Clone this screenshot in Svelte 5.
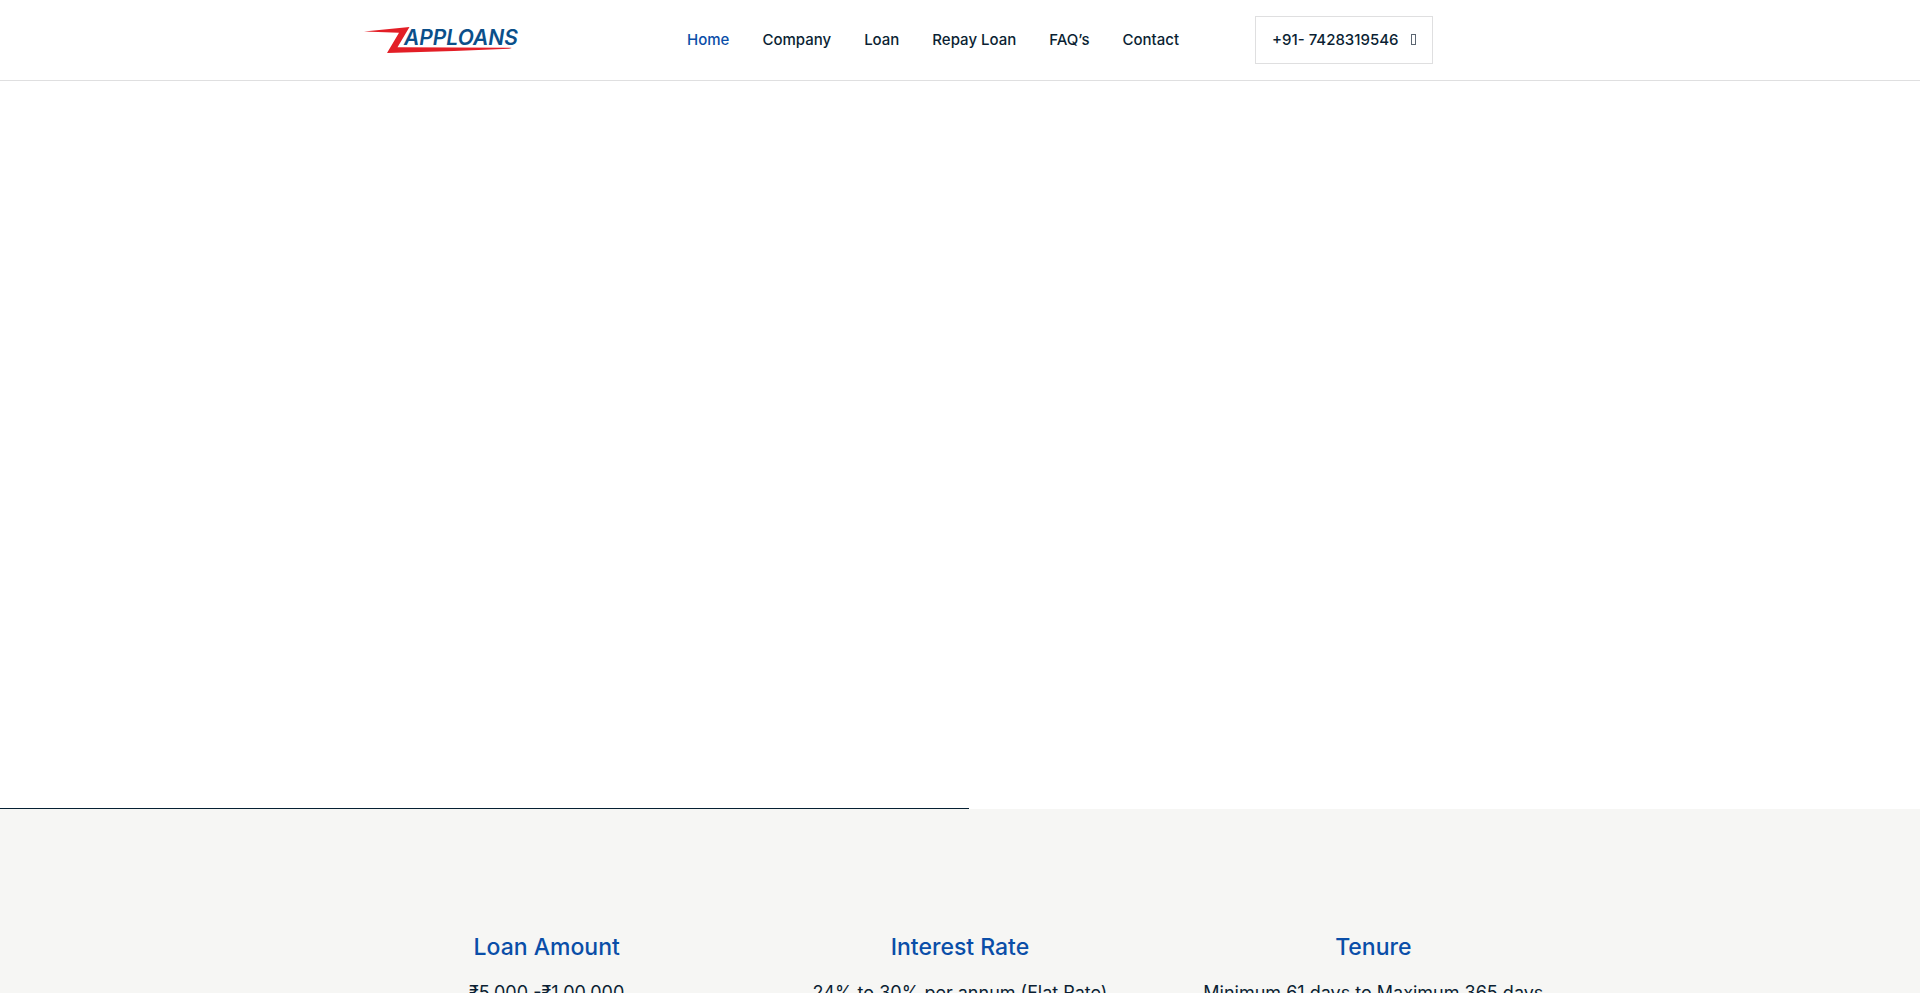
<script>
    const links = [
        { label: "Home", href: "#home" },
        { label: "Company", href: "#company" },
        { label: "Loan", href: "#loan" },
        { label: "Repay Loan", href: "#repay" },
        { label: "FAQ’s", href: "#faq" },
        { label: "Contact", href: "#contact" },
    ];

    const terms = [
        { title: "Loan Amount", text: "₹5,000 -₹1,00,000" },
        { title: "Interest Rate", text: "24% to 30% per annum (Flat Rate)" },
        { title: "Tenure", text: "Minimum 61 days to Maximum 365 days" },
    ];

    let active = "Home";
    let progress = 50.45;
</script>

<header>
    <div class="bar">
        <a class="logo" href="#home" aria-label="Zapploans">
            <svg viewBox="0 0 154 30" width="154" height="30">
                <path d="M0 6.500 45.500 2 33.500 22.300 147 22.800Q149 23.200 145 23.700L90 26 23 28 35 7.800Z" fill="#e31e26" />
                <text x="40" y="20">APPLOANS</text>
            </svg>
        </a>
        <nav>
            {#each links as link}
                <a href={link.href} class:active={link.label === active}>{link.label}</a>
            {/each}
        </nav>
        <a class="phone" href="tel:+917428319546">
            +91- 7428319546
            <svg viewBox="0 0 5 11" width="5" height="11" aria-hidden="true">
                <rect x="0.5" y="0.5" width="4" height="10" />
            </svg>
        </a>
    </div>
</header>

<main>
    <section class="hero">
        <div class="progress" style="width: {progress}%"></div>
    </section>

    <section class="terms">
        <div class="columns">
            {#each terms as term}
                <div class="term">
                    <h2>{term.title}</h2>
                    <p>{term.text}</p>
                </div>
            {/each}
        </div>
    </section>
</main>

<style>
    :global(body) {
        margin: 0;
        background: #fff;
        color: #0b1f33;
        font-family: Inter, "Liberation Sans", sans-serif;
    }

    header {
        border-bottom: 1px solid #dfdfe0;
    }

    .bar {
        display: flex;
        align-items: center;
        max-width: 1192px;
        height: 80px;
        margin: 0 auto;
    }

    .logo {
        display: flex;
    }

    .logo svg {
        overflow: visible;
    }

    .logo text {
        fill: #0b4f8a;
        font: italic 600 21px Inter, sans-serif;
    }

    nav {
        display: flex;
        gap: 33px;
        margin-left: 169px;
    }

    nav a,
    .phone {
        color: #0b1f33;
        font-size: 15px;
        font-weight: 500;
        line-height: 24px;
        text-decoration: none;
        white-space: nowrap;
    }

    nav a.active {
        color: #0a4ea8;
    }

    .phone {
        display: flex;
        align-items: center;
        gap: 12px;
        margin-left: 76px;
        padding: 11px 16px;
        border: 1px solid #dfdfe0;
    }

    .phone svg {
        margin-bottom: 2px;
    }

    .phone rect {
        fill: none;
        stroke: #5c6672;
    }

    .hero {
        display: flex;
        align-items: flex-end;
        height: 728px;
    }

    .progress {
        height: 1px;
        background: #062033;
    }

    .terms {
        padding: 120px 20px;
        background: #f6f6f4;
    }

    .columns {
        display: grid;
        grid-template-columns: repeat(3, 1fr);
        max-width: 1240px;
        margin: 0 auto;
        text-align: center;
    }

    h2 {
        margin: 0;
        color: #0a4ea8;
        font-size: 23px;
        font-weight: 500;
        line-height: 36px;
    }

    p {
        margin: 14px 0 0;
        font-size: 18px;
        line-height: 28px;
    }
</style>
